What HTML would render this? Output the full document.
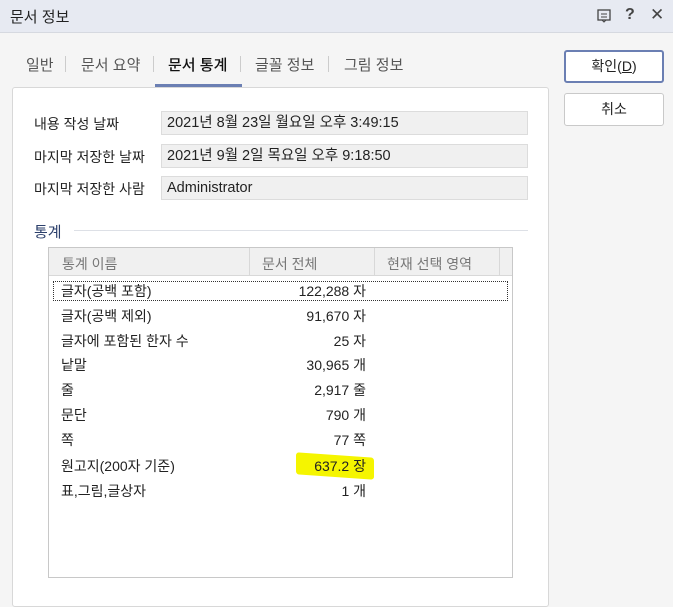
<!DOCTYPE html>
<html><head><meta charset="utf-8"><style>
*{margin:0;padding:0;box-sizing:border-box}
body{width:673px;height:590px;overflow:hidden;background:#f5f5f5;font-family:"Liberation Sans","Noto Sans CJK KR",sans-serif;color:#222;position:relative;font-size:14px}
.a{position:absolute;white-space:nowrap}
.title{left:0;top:0;width:673px;height:33px;background:#e7eaf2;border-bottom:1px solid #d6d9e0}
.field{position:absolute;left:161px;width:367px;height:24px;background:#f0f0f0;border:1px solid #dcdcdc;padding-left:5px;line-height:22px;font-size:14.5px}
.btn{position:absolute;left:564px;width:100px;height:33px;background:#fff;border:1px solid #c9c9c9;border-radius:3px;text-align:center;line-height:31px;font-size:14px}
.row{position:absolute;left:49px;width:462px;height:24px;line-height:24px;font-size:14px}
.row .n{position:absolute;left:12px}
.row .v{position:absolute;right:145px}
</style></head><body>
<div class="a title"></div>
<div class="a" style="left:10px;top:6px;font-size:15px">문서 정보</div>
<svg class="a" style="left:597px;top:9px" width="14" height="14" viewBox="0 0 14 14"><rect x="1" y="1" width="12" height="10" fill="none" stroke="#444" stroke-width="1.3"/><path d="M4 5h6M4 8h6" stroke="#444"/><path d="M5 11l2 2 2-2" fill="none" stroke="#444"/></svg>
<div class="a" style="left:625px;top:6px;font-size:16px;font-weight:bold;color:#444">?</div>
<div class="a" style="left:650px;top:5px;font-size:17px;color:#444">✕</div>

<div class="a" style="left:26px;top:54px;font-size:15px;color:#555">일반</div>
<div class="a" style="left:65px;top:56px;width:1px;height:16px;background:#ccc"></div>
<div class="a" style="left:81px;top:54px;font-size:15px;color:#555">문서 요약</div>
<div class="a" style="left:153px;top:56px;width:1px;height:16px;background:#ccc"></div>
<div class="a" style="left:168px;top:54px;font-size:15px;color:#111;font-weight:500">문서 통계</div>
<div class="a" style="left:155px;top:84px;width:87px;height:3px;background:#6b7fb3"></div>
<div class="a" style="left:240px;top:56px;width:1px;height:16px;background:#ccc"></div>
<div class="a" style="left:255px;top:54px;font-size:15px;color:#555">글꼴 정보</div>
<div class="a" style="left:328px;top:56px;width:1px;height:16px;background:#ccc"></div>
<div class="a" style="left:344px;top:54px;font-size:15px;color:#555">그림 정보</div>

<div class="a" style="left:12px;top:87px;width:537px;height:520px;background:#fff;border:1px solid #d8d8d8;border-radius:3px"></div>

<div class="a" style="left:34px;top:114px">내용 작성 날짜</div>
<div class="field" style="top:111px">2021년 8월 23일 월요일 오후 3:49:15</div>
<div class="a" style="left:34px;top:147px">마지막 저장한 날짜</div>
<div class="field" style="top:144px">2021년 9월 2일 목요일 오후 9:18:50</div>
<div class="a" style="left:34px;top:179px">마지막 저장한 사람</div>
<div class="field" style="top:176px">Administrator</div>

<div class="a" style="left:34px;top:221px;font-size:15px;color:#2b3f6b">통계</div>
<div class="a" style="left:74px;top:230px;width:454px;height:1px;background:#dde0e6"></div>

<div class="a" style="left:48px;top:247px;width:465px;height:331px;border:1px solid #c8c8c8;background:#fff"></div>
<div class="a" style="left:49px;top:248px;width:463px;height:28px;background:#f0f0f0;border-bottom:1px solid #d8d8d8"></div>
<div class="a" style="left:249px;top:248px;width:1px;height:28px;background:#d8d8d8"></div>
<div class="a" style="left:374px;top:248px;width:1px;height:28px;background:#d8d8d8"></div>
<div class="a" style="left:499px;top:248px;width:1px;height:28px;background:#d8d8d8"></div>
<div class="a" style="left:62px;top:254px;color:#777">통계 이름</div>
<div class="a" style="left:262px;top:254px;color:#777">문서 전체</div>
<div class="a" style="left:387px;top:254px;color:#777">현재 선택 영역</div>
<div class="a" style="left:53px;top:281px;width:455px;height:20px;border:1px dotted #333"></div>
<div class="a" style="left:296px;top:455px;width:78px;height:22px;background:#f5f500;transform:skewY(4deg);border-radius:3px"></div>

<div class="row" style="top:279px"><span class="n">글자(공백 포함)</span><span class="v">122,288 자</span></div>
<div class="row" style="top:304px"><span class="n">글자(공백 제외)</span><span class="v">91,670 자</span></div>
<div class="row" style="top:329px"><span class="n">글자에 포함된 한자 수</span><span class="v">25 자</span></div>
<div class="row" style="top:353px"><span class="n">낱말</span><span class="v">30,965 개</span></div>
<div class="row" style="top:378px"><span class="n">줄</span><span class="v">2,917 줄</span></div>
<div class="row" style="top:403px"><span class="n">문단</span><span class="v">790 개</span></div>
<div class="row" style="top:428px"><span class="n">쪽</span><span class="v">77 쪽</span></div>
<div class="row" style="top:454px"><span class="n">원고지(200자 기준)</span><span class="v">637.2 장</span></div>
<div class="row" style="top:479px"><span class="n">표,그림,글상자</span><span class="v">1 개</span></div>

<div class="btn" style="top:50px;border:2px solid #6b7fb3;line-height:29px">확인(<u>D</u>)</div>
<div class="btn" style="top:93px">취소</div>
</body></html>
